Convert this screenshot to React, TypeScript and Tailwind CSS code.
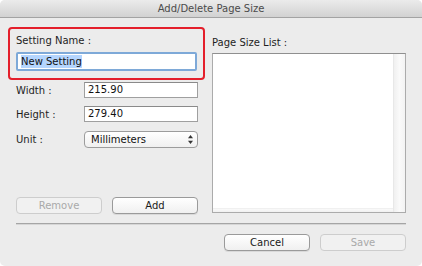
const font = { fontFamily: '"DejaVu Sans", "Liberation Sans", sans-serif' };

function MacButton({ label, disabled }: { label: string; disabled?: boolean }) {
	return (
		<button
			type="button"
			disabled={disabled}
			className={`w-[86px] h-[17px] rounded-[4px] border text-[10px] leading-[15px] ${
				disabled
					? "border-[#cdcdcd] bg-[#f1f1f1] text-[#a9a9a9]"
					: "border-[#9a9a9a] bg-gradient-to-b from-[#ffffff] to-[#f0f0f0] text-[#1a1a1a] shadow-[0_1px_0_rgba(0,0,0,0.08)]"
			}`}
		>
			{label}
		</button>
	);
}

function Field({ label, value }: { label: string; value: string }) {
	return (
		<div className="flex items-center pl-2 pr-[7px]">
			<span className="w-[68px] text-[10px] text-[#1e1e1e]">{label}</span>
			<div className="flex-1 h-[16px] border border-[#9f9f9f] border-t-[#8a8a8a] bg-white px-[3px] text-[10px] leading-[14px] text-[#111]">
				{value}
			</div>
		</div>
	);
}

export default function App() {
	return (
		<div
			style={font}
			className="w-[422px] h-[266px] bg-[#ececec] flex flex-col overflow-hidden rounded-[5px]"
		>
			<div className="h-[18px] shrink-0 bg-gradient-to-b from-[#ebebeb] to-[#d2d2d2] border-b border-[#a3a3a3] flex items-center justify-center text-[10px] text-[#4b4b4b]">
				Add/Delete Page Size
			</div>

			<div className="flex pt-[9px] pl-2 h-[196px] shrink-0">
				<div className="w-[197px] flex flex-col">
					<div className="h-[53px] border-2 border-[#e41f2b] rounded-[4px] px-[6px] pt-[5px]">
						<div className="text-[10px] leading-[14px] text-[#1e1e1e]">Setting Name :</div>
						<div className="mt-[4px] h-[19px] rounded-[2px] border-[2px] border-[#7ea9d8] bg-white px-[3px] flex items-center">
							<span className="bg-[#b4d5fe] text-[10px] leading-[13px] text-[#111]">New Setting</span>
						</div>
					</div>

					<div className="mt-[2px] flex flex-col gap-[8px]">
						<Field label="Width :" value="215.90" />
						<Field label="Height :" value="279.40" />
					</div>

					<div className="mt-[9px] flex items-center pl-2 pr-[7px]">
						<span className="w-[68px] text-[10px] text-[#1e1e1e]">Unit :</span>
						<div className="flex-1 h-[17px] rounded-[4px] border border-[#9c9c9c] bg-gradient-to-b from-[#ffffff] to-[#f0f0f0] flex items-center pl-[6px] pr-[4px] text-[10px] text-[#111]">
							<span className="flex-1">Millimeters</span>
							<svg width="5" height="9" viewBox="0 0 5 9">
								<path d="M2.5 0 L5 3.2 L0 3.2 Z" fill="#333" />
								<path d="M2.5 9 L5 5.8 L0 5.8 Z" fill="#333" />
							</svg>
						</div>
					</div>

					<div className="mt-auto flex gap-[10px] pl-2">
						<MacButton label="Remove" disabled />
						<MacButton label="Add" />
					</div>
				</div>

				<div className="ml-[7px] w-[194px] flex flex-col">
					<div className="mt-[9px] text-[10px] leading-[14px] text-[#1e1e1e]">Page Size List :</div>
					<div className="mt-[3px] h-[160px] border border-[#ababab] border-t-[#8f8f8f] bg-white flex">
						<div className="flex-1 flex flex-col">
							<div className="flex-1" />
							<div className="h-[4px] bg-gradient-to-b from-[#fafafa] to-[#f0f0f0] border-t border-[#f0f0f0]" />
						</div>
						<div className="w-[12px] bg-gradient-to-r from-[#f0f0f0] via-[#fafafa] to-[#f3f3f3] border-l border-[#e8e8e8]" />
					</div>
				</div>
			</div>

			<div className="mt-[9px] mx-4 h-[2px] border-t border-[#a5a5a5] border-b border-b-[#d6d6d6]" />

			<div className="mt-[9px] flex justify-end gap-[10px] pr-4">
				<MacButton label="Cancel" />
				<MacButton label="Save" disabled />
			</div>
		</div>
	);
}
